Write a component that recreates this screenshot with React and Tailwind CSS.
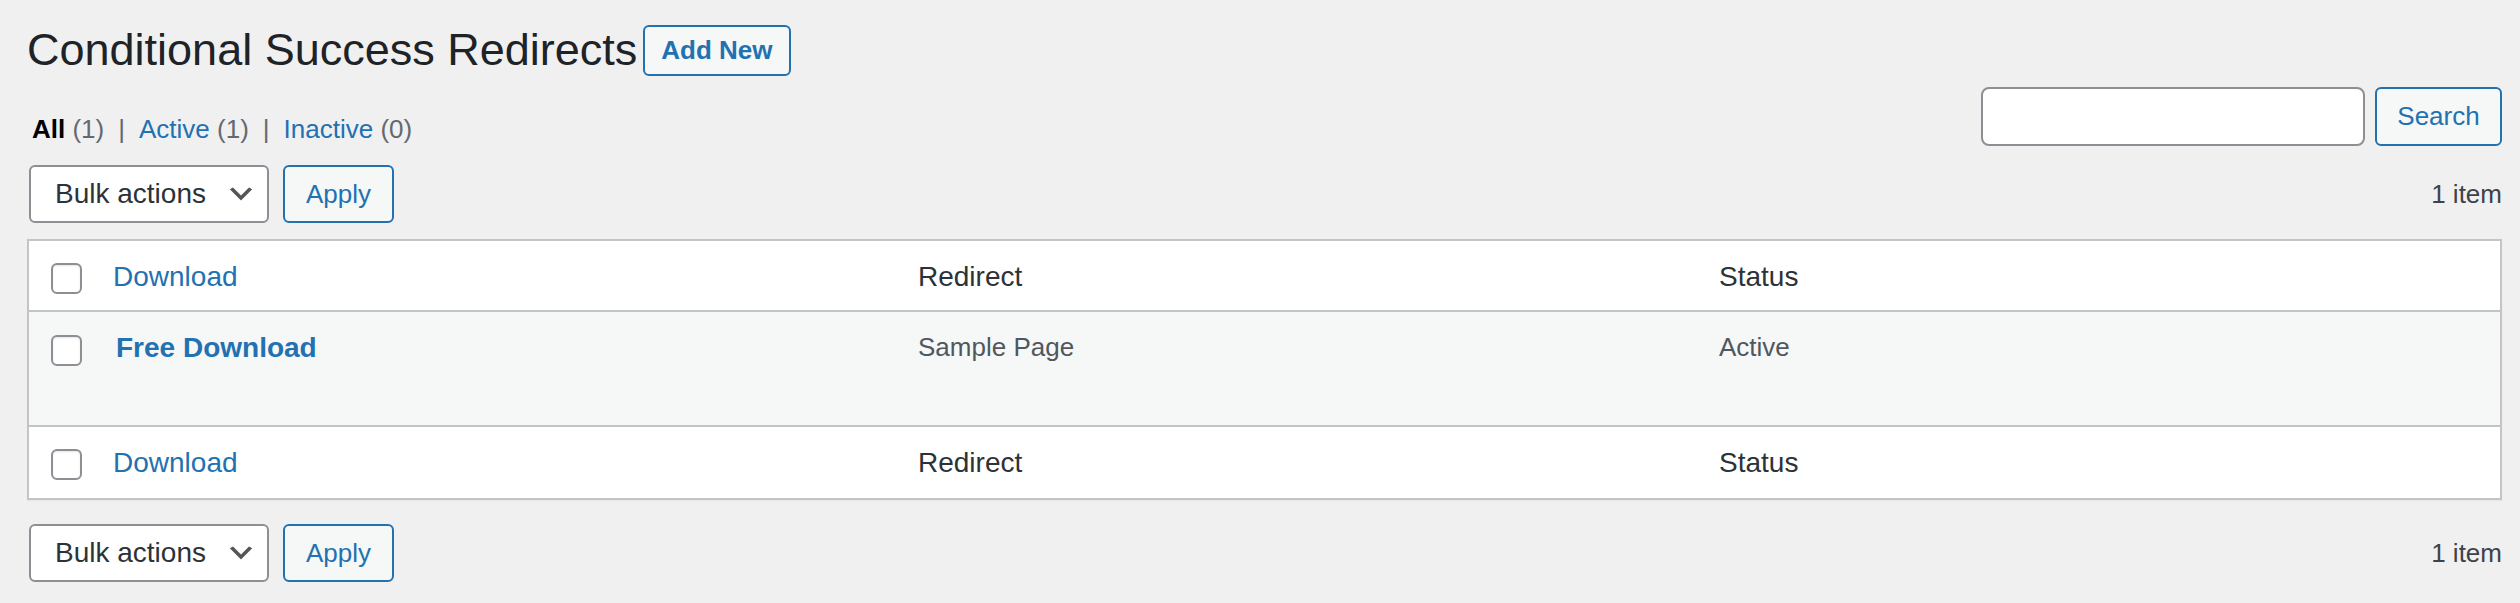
import React from "react";

const font = { fontFamily: '"Liberation Sans", Arial, sans-serif' };

const Checkbox = () => (
  <div className="w-[31px] h-[31px] bg-white border-2 border-[#8c8f94] rounded-[6px] shadow-[inset_0_1px_2px_rgba(0,0,0,0.1)]" />
);

const Chevron = () => (
  <svg viewBox="0 0 20 20" className="w-[32px] h-[32px]" aria-hidden="true">
    <path d="M5 6l5 5 5-5 2 1-7 7-7-7 2-1z" fill="#555" />
  </svg>
);

// top and bottom bars share the same layout
const TableNav = ({ className = "" }) => (
  <div className={`flex items-center justify-between ${className}`}>
    <div className="flex items-center ml-[2px]">
      <div className="flex items-center justify-between w-[240px] h-[58px] pl-[24px] pr-[10px] bg-white border-2 border-[#8c8f94] rounded-[6px] text-[28px] text-[#2c3338]">
        <span>Bulk actions</span>
        <Chevron />
      </div>
      <button className="ml-[14px] h-[58px] w-[111px] border-2 border-[#2271b1] rounded-[6px] bg-[#f6f7f7] text-[26px] text-[#2271b1]">
        Apply
      </button>
    </div>
    <span className="text-[26px] text-[#3c434a]">1 item</span>
  </div>
);

const HeadRow = ({ bottom }) => (
  <div
    className={`grid grid-cols-[64px_805px_801px_1fr] h-[71px] ${
      bottom ? "" : "border-b-2 border-[#c3c4c7]"
    }`}
  >
    <div className="pl-[22px] pt-[22px]">
      <Checkbox />
    </div>
    <div className="px-[20px] pt-[16px] text-[28px] leading-[39px] text-[#2271b1]">
      Download
    </div>
    <div className="px-[20px] pt-[16px] text-[28px] leading-[39px] text-[#2c3338]">
      Redirect
    </div>
    <div className="px-[20px] pt-[16px] text-[28px] leading-[39px] text-[#2c3338]">
      Status
    </div>
  </div>
);

export default function App() {
  return (
    <div className="min-h-screen bg-[#f0f0f1] pl-[27px] pr-[18px]" style={font}>
      {/* heading */}
      <div className="flex items-center pt-[21px]">
        <h1 className="text-[45px] leading-[58px] font-normal text-[#1d2327]">
          Conditional Success Redirects
        </h1>
        <button className="ml-[6px] h-[51px] px-[16px] border-2 border-[#2271b1] rounded-[6px] bg-[#f6f7f7] text-[26px] font-bold text-[#2271b1]">
          Add New
        </button>
      </div>

      {/* filters + search */}
      <div className="flex items-start justify-between h-[59px] mt-[8px]">
        <div className="mt-[23px] ml-[5px] text-[26px] leading-[39px] text-[#646970]">
          <span className="font-bold text-black">All</span> (1)
          <span className="mx-[14px]">|</span>
          <span className="text-[#2271b1]">Active</span> (1)
          <span className="mx-[14px]">|</span>
          <span className="text-[#2271b1]">Inactive</span> (0)
        </div>
        <div className="flex items-center">
          <input
            type="text"
            className="w-[384px] h-[59px] bg-white border-2 border-[#8c8f94] rounded-[8px] px-[16px] text-[28px] outline-none"
          />
          <button className="ml-[10px] w-[127px] h-[59px] border-2 border-[#2271b1] rounded-[6px] bg-[#f6f7f7] text-[26px] text-[#2271b1]">
            Search
          </button>
        </div>
      </div>

      <TableNav className="mt-[19px]" />

      {/* list table */}
      <div className="mt-[16px] bg-white border-2 border-[#c3c4c7] shadow-[0_1px_1px_rgba(0,0,0,0.04)]">
        <HeadRow />
        <div className="grid grid-cols-[64px_805px_801px_1fr] h-[115px] bg-[#f6f7f7] border-b-2 border-[#c3c4c7]">
          <div className="pl-[22px] pt-[23px]">
            <Checkbox />
          </div>
          <div className="pl-[23px] pr-[20px] pt-[16px] text-[28px] leading-[39px] font-bold text-[#2271b1]">
            Free Download
          </div>
          <div className="px-[20px] pt-[16px] text-[26px] leading-[39px] text-[#50575e]">
            Sample Page
          </div>
          <div className="px-[20px] pt-[16px] text-[26px] leading-[39px] text-[#50575e]">
            Active
          </div>
        </div>
        <HeadRow bottom />
      </div>

      <TableNav className="mt-[24px]" />
    </div>
  );
}
